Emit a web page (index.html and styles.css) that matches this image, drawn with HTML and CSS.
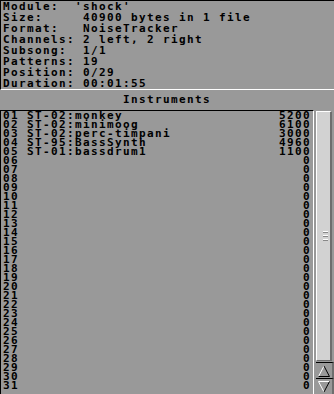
FILE: index.html
```html
<!DOCTYPE html>
<html>
<head>
    <title>Module Info</title>
    <link rel="stylesheet" href="styles.css">
</head>
<body>
    <div class="info">
        <div class="line">Module:  'shock'</div>
        <div class="line">Size:     40900 bytes in 1 file</div>
        <div class="line">Format:   NoiseTracker</div>
        <div class="line">Channels: 2 left, 2 right</div>
        <div class="line">Subsong:  1/1</div>
        <div class="line">Patterns: 19</div>
        <div class="line">Position: 0/29</div>
        <div class="line">Duration: 00:01:55</div>
    </div>

    <div class="header">Instruments</div>

    <div class="main">
        <div class="list" id="list"></div>
        <div class="scroll">
            <div class="knob">
                <div class="grip"><i></i><i></i><i></i></div>
            </div>
            <div class="arrow">
                <svg width="14" height="12" viewBox="0 0 14 12">
                    <polyline points="1.5,11.5 7,1 " fill="none" stroke="#fff" stroke-width="1"/>
                    <polyline points="7,1 12.5,11.5 1.5,11.5" fill="none" stroke="#000" stroke-width="1"/>
                </svg>
            </div>
            <div class="arrow">
                <svg width="14" height="12" viewBox="0 0 14 12">
                    <polyline points="1.5,0.5 12.5,0.5" fill="none" stroke="#fff" stroke-width="1"/>
                    <polyline points="1.5,0.5 7,11" fill="none" stroke="#fff" stroke-width="1"/>
                    <polyline points="7,11 12.5,0.5" fill="none" stroke="#000" stroke-width="1"/>
                </svg>
            </div>
        </div>
    </div>

    <script>
        const instruments = [
            ['ST-02:monkey', 5200],
            ['ST-02:minimoog', 6100],
            ['ST-02:perc-timpani', 3000],
            ['ST-95:BassSynth', 4960],
            ['ST-01:bassdrum1', 1100]
        ];

        const list = document.getElementById('list');
        for (let i = 1; i <= 31; i++) {
            const item = instruments[i - 1] || ['', 0];
            const row = document.createElement('div');
            row.className = 'row';
            const num = String(i).padStart(2, '0');
            row.innerHTML = `<span>${num} ${item[0]}</span><span>${item[1]}</span>`;
            list.appendChild(row);
        }
    </script>
</body>
</html>
```

FILE: styles.css
```css
body {
    margin: 0;
    background: #999999;
    color: #000;
    font-family: 'DejaVu Sans Mono', monospace;
    font-weight: bold;
    font-size: 11px;
    letter-spacing: 1.38px;
    width: 334px;
    height: 394px;
    overflow: hidden;
}

.info {
    border-top: 1px solid #000;
    border-left: 1px solid #000;
    border-bottom: 1px solid #fff;
    height: 88px;
    padding-left: 2px;
    overflow: hidden;
}

.line {
    white-space: pre;
    line-height: 11px;
}

.header {
    height: 20px;
    line-height: 20px;
    text-align: center;
}

.main {
    display: flex;
    height: 284px;
}

.list {
    width: 311px;
    border-top: 1px solid #000;
    border-left: 1px solid #000;
    border-right: 1px solid #fff;
    padding-left: 2px;
    overflow: hidden;
}

.row {
    display: flex;
    justify-content: space-between;
    white-space: pre;
    line-height: 9px;
    padding-right: 2px;
}

.scroll {
    width: 20px;
    display: flex;
    flex-direction: column;
    padding-left: 2px;
    box-sizing: border-box;
}

.knob {
    flex: 1;
    margin: 1px 2px 1px 0;
    border-top: 1px solid #fff;
    border-left: 1px solid #fff;
    border-right: 2px solid #6e6e6e;
    border-bottom: 1px solid #6e6e6e;
    background: #d2d2d2;
    display: flex;
    align-items: center;
    justify-content: center;
}

.grip {
    display: flex;
    flex-direction: column;
    gap: 2px;
    margin-left: 4px;
}

.grip i {
    display: block;
    width: 5px;
    height: 1px;
    background: #fff;
    border-bottom: 1px solid #888;
}

.arrow {
    height: 15px;
    border-top: 1px solid #000;
    display: flex;
    align-items: center;
    justify-content: center;
    background: #999999;
    border-right: 2px solid #6e6e6e;
}
```
